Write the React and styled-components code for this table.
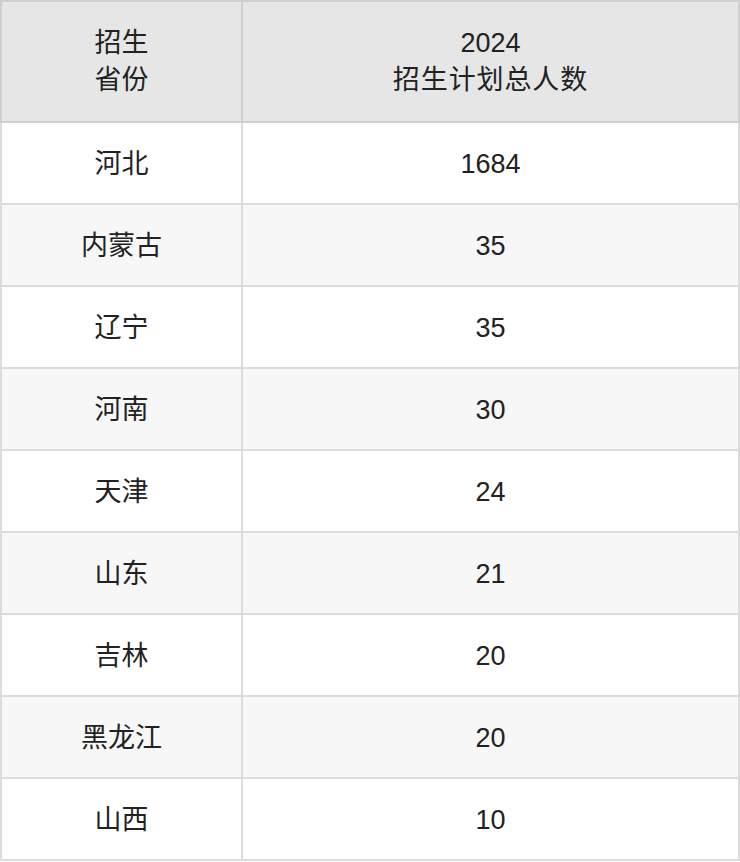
import React from "react";
import styled, { createGlobalStyle } from "styled-components";

const Global = createGlobalStyle`
  html, body { margin: 0; padding: 0; background: #fff; }
  body { font-family: "Liberation Sans", "Noto Sans CJK SC", sans-serif; }
`;

const Table = styled.div`
  width: 740px;
  display: grid;
  grid-template-columns: 243px 497px;
  box-sizing: border-box;
`;

const Cell = styled.div`
  box-sizing: border-box;
  display: flex;
  flex-direction: column;
  align-items: center;
  justify-content: center;
  text-align: center;
  height: ${(p) => (p.$head ? 123 : 82)}px;
  background: ${(p) => (p.$head ? "#e6e6e6" : p.$alt ? "#f7f7f7" : "#ffffff")};
  border-right: 2px solid ${(p) => (p.$head ? "#cfcfcf" : "#dcdcdc")};
  border-bottom: 2px solid ${(p) => (p.$head ? "#cfcfcf" : "#dcdcdc")};
  border-left: ${(p) => (p.$first ? `2px solid ${p.$head ? "#cfcfcf" : "#dcdcdc"}` : "none")};
  border-top: ${(p) => (p.$head ? "2px solid #cfcfcf" : "none")};
  font-size: 27px;
  line-height: 37px;
  color: #222;
  padding-top: ${(p) => (p.$head ? 0 : 2)}px;
`;

const HeadLine = styled.span`
  display: block;
  letter-spacing: ${(p) => (p.$wide ? "0.9px" : "0")};
`;

const rows = [
  ["河北", "1684"],
  ["内蒙古", "35"],
  ["辽宁", "35"],
  ["河南", "30"],
  ["天津", "24"],
  ["山东", "21"],
  ["吉林", "20"],
  ["黑龙江", "20"],
  ["山西", "10"],
];

export default function App() {
  return (
    <>
      <Global />
      <Table>
        <Cell $head $first>
          <HeadLine>招生</HeadLine>
          <HeadLine>省份</HeadLine>
        </Cell>
        <Cell $head>
          <HeadLine>2024</HeadLine>
          <HeadLine $wide>招生计划总人数</HeadLine>
        </Cell>
        {rows.map(([p, n], i) => (
          <React.Fragment key={p}>
            <Cell $first $alt={i % 2 === 1}>{p}</Cell>
            <Cell $alt={i % 2 === 1}>{n}</Cell>
          </React.Fragment>
        ))}
      </Table>
    </>
  );
}
